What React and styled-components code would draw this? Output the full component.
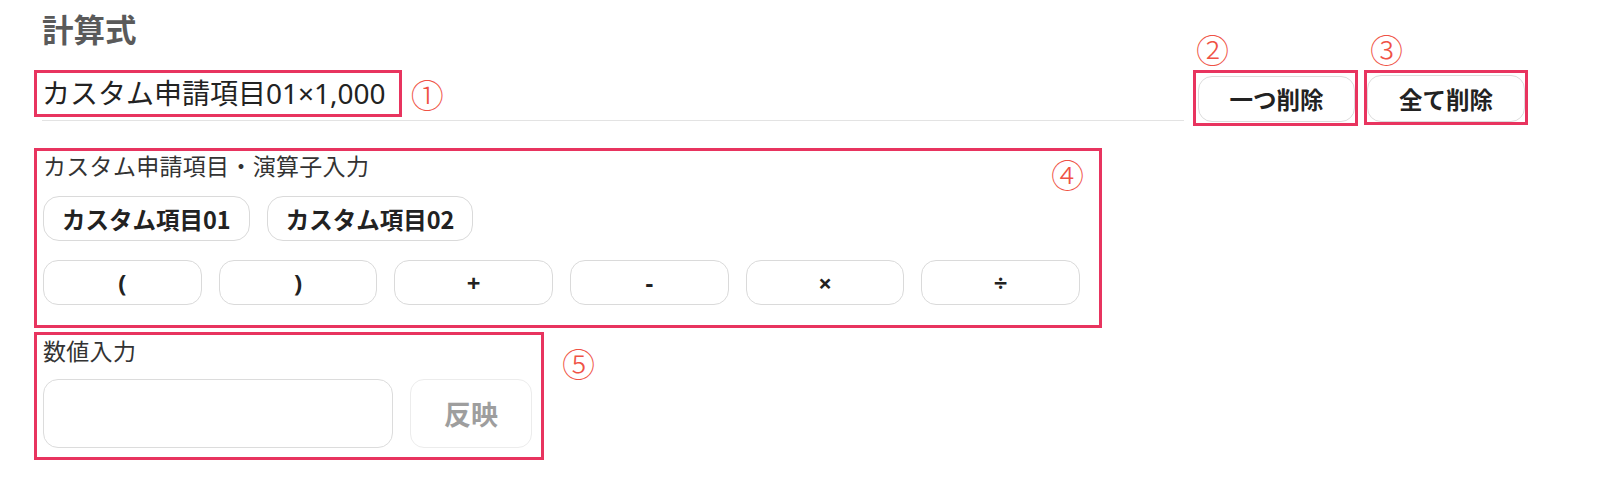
import React from "react";
import styled, { createGlobalStyle } from "styled-components";

const RED = "#e8345f";
const MARK = "#ef5245";

const GlobalStyle = createGlobalStyle`
  html, body { margin: 0; padding: 0; background: #fff; }
  body {
    font-family: "Noto Sans CJK JP", "Noto Sans", sans-serif;
    color: #222;
  }
  * { box-sizing: border-box; }
`;

const Page = styled.div`
  width: 1600px;
  height: 477px;
  padding: 10px 0 0 34px;
  overflow: hidden;
`;

const Title = styled.h2`
  margin: 0 0 0 8px;
  font-size: 31.5px;
  line-height: 36px;
  font-weight: 700;
  color: #5a5a5a;
`;

const TopRow = styled.div`
  display: flex;
  align-items: flex-start;
  margin-top: 24px;
`;

const FormulaField = styled.div`
  width: 1150px;
  display: flex;
  flex-direction: column;
  align-items: flex-start;
`;

const Marked = styled.div`
  position: relative;
  border: 3px solid ${RED};
  display: inline-flex;
`;

const Mark = styled.span`
  position: absolute;
  font-size: 33px;
  line-height: 33px;
  font-weight: 300;
  color: ${MARK};
  white-space: nowrap;
  ${(p) => (p.$left !== undefined ? `left: ${p.$left};` : "")}
  ${(p) => (p.$right !== undefined ? `right: ${p.$right};` : "")}
  top: ${(p) => p.$top};
`;

const FormulaText = styled.div`
  font-family: "Noto Sans", "Noto Sans CJK JP", sans-serif;
  font-size: 28px;
  line-height: 41px;
  padding: 0 13px 0 5px;
  color: #222;
`;

const Underline = styled.div`
  align-self: stretch;
  margin: 3px 0 0 8px;
  height: 1px;
  background: #e3e3e3;
`;

const ActionBox = styled(Marked)`
  margin-left: ${(p) => p.$ml}px;
  padding: ${(p) => p.$pad};
`;

const ActionButton = styled.button`
  width: ${(p) => p.$w}px;
  height: ${(p) => p.$h}px;
  border: 1.5px solid #dcdcdc;
  border-radius: 14px;
  background: #fff;
  font-family: inherit;
  font-size: 23.5px;
  font-weight: 700;
  color: #222;
  padding: 0;
`;

const Section = styled(Marked)`
  display: flex;
  flex-direction: column;
  width: ${(p) => p.$w}px;
  padding: ${(p) => p.$pad};
  margin-top: ${(p) => p.$mt}px;
`;

const Label = styled.div`
  font-size: 23px;
  line-height: 24px;
  color: #333;
  letter-spacing: 0.3px;
`;

const ChipRow = styled.div`
  display: flex;
  gap: 17px;
  margin-top: 19px;
`;

const Chip = styled.button`
  height: 45px;
  padding: 0 18px;
  border: 1.5px solid #dadada;
  border-radius: 16px;
  background: #fff;
  font-family: inherit;
  font-size: 23.5px;
  font-weight: 700;
  color: #222;
`;

const OpGrid = styled.div`
  display: grid;
  grid-template-columns: repeat(6, 1fr);
  gap: 17px;
  margin-top: 19px;
`;

const OpButton = styled.button`
  height: 45px;
  border: 1.5px solid #dadada;
  border-radius: 15px;
  background: #fff;
  font-family: "Noto Sans", "Noto Sans CJK JP", sans-serif;
  font-size: 24px;
  font-weight: 700;
  color: #222;
  padding: 0;
`;

const InputRow = styled.div`
  display: flex;
  gap: 17px;
  margin-top: 17px;
`;

const NumberInput = styled.input`
  width: 350px;
  height: 69px;
  border: 1.5px solid #dcdcdc;
  border-radius: 15px;
  background: #fff;
  font-family: inherit;
  font-size: 22px;
  padding: 0 14px;
  outline: none;
`;

const ReflectButton = styled.button`
  width: 122px;
  height: 69px;
  border: 1.5px solid #ececec;
  border-radius: 14px;
  background: #fff;
  font-family: inherit;
  font-size: 27px;
  font-weight: 700;
  color: #9e9e9e;
  padding: 0;
`;

const customItems = ["カスタム項目01", "カスタム項目02"];
const operators = ["(", ")", "+", "-", "×", "÷"];

export default function App() {
  return (
    <>
      <GlobalStyle />
      <Page>
        <Title>計算式</Title>
        <TopRow>
          <FormulaField>
            <Marked>
              <FormulaText>カスタム申請項目01×1,000</FormulaText>
              <Mark $left="calc(100% + 12px)" $top="5px">①</Mark>
            </Marked>
            <Underline />
          </FormulaField>
          <ActionBox $ml={9} $pad="3px 0 1px 2px">
            <Mark $left="0px" $top="-40px">②</Mark>
            <ActionButton $w={157} $h={46}>一つ削除</ActionButton>
          </ActionBox>
          <ActionBox $ml={6} $pad="2px 0 0 0">
            <Mark $left="3px" $top="-40px">③</Mark>
            <ActionButton $w={158} $h={47}>全て削除</ActionButton>
          </ActionBox>
        </TopRow>

        <Section $w={1068} $pad="2px 19px 20px 6px" $mt={22}>
          <Label>カスタム申請項目・演算子入力</Label>
          <Mark $right="15px" $top="7px">④</Mark>
          <ChipRow>
            {customItems.map((c) => (
              <Chip key={c}>{c}</Chip>
            ))}
          </ChipRow>
          <OpGrid>
            {operators.map((o) => (
              <OpButton key={o}>{o}</OpButton>
            ))}
          </OpGrid>
        </Section>

        <Section $w={510} $pad="3px 9px 9px 6px" $mt={4}>
          <Label>数値入力</Label>
          <Mark $left="calc(100% + 21px)" $top="12px">⑤</Mark>
          <InputRow>
            <NumberInput type="text" />
            <ReflectButton>反映</ReflectButton>
          </InputRow>
        </Section>
      </Page>
    </>
  );
}
